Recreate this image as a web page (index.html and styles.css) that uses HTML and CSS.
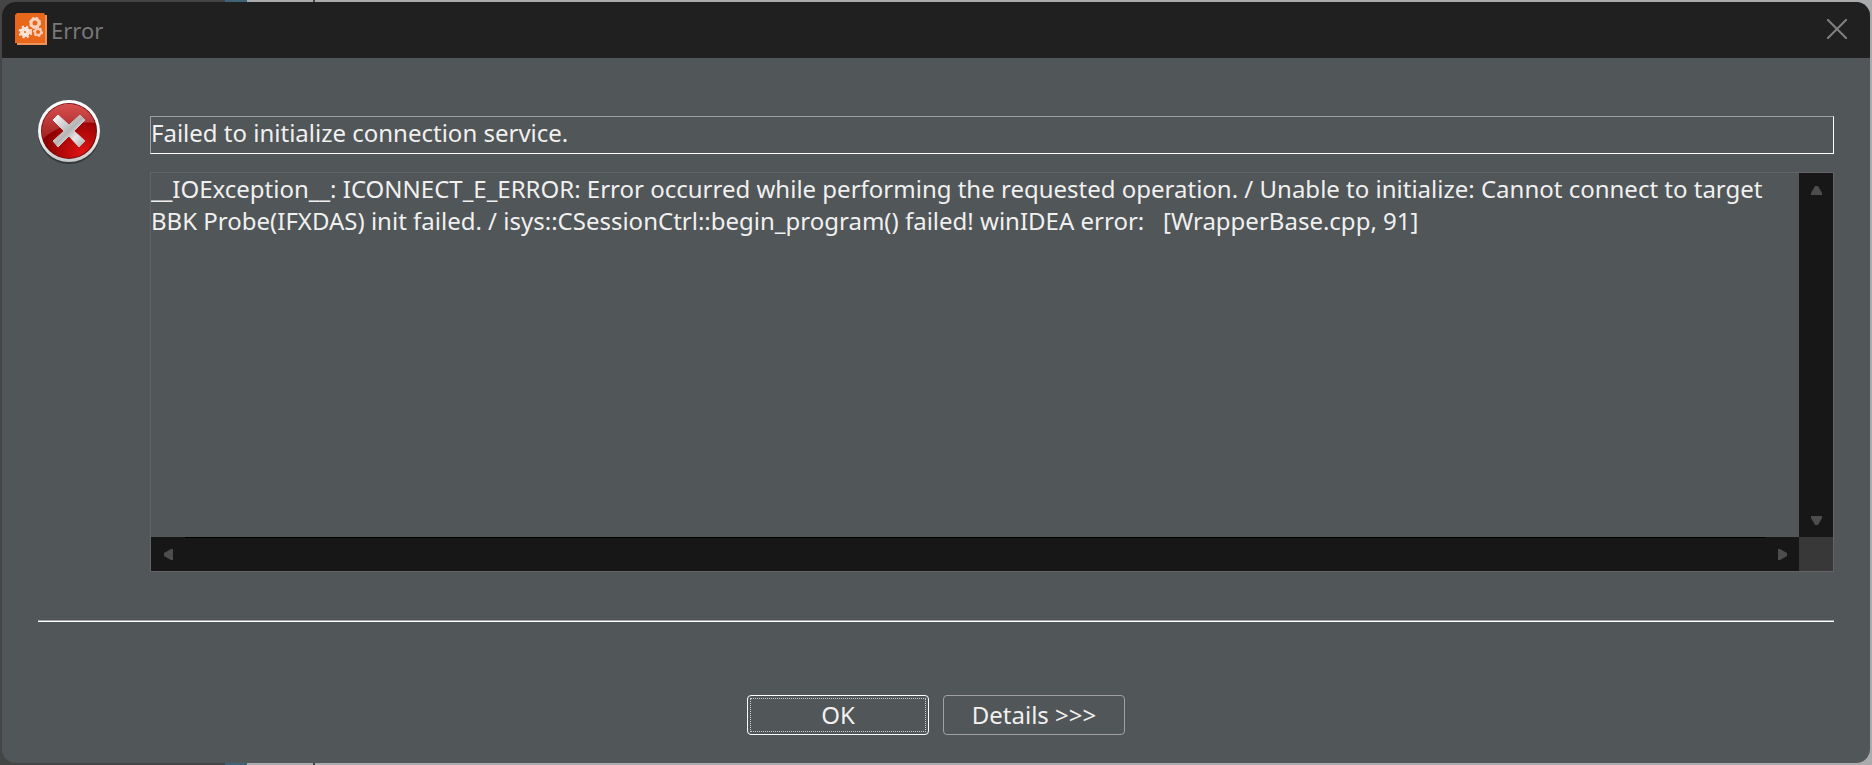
FILE: index.html
```html
<!DOCTYPE html>
<html lang="en">
<head>
  <meta charset="UTF-8">
  <meta name="viewport" content="width=device-width, initial-scale=1.0">
  <title>Error</title>
  <link rel="stylesheet" href="styles.css">
</head>
<body>
  <div class="dialog" role="alertdialog" aria-labelledby="dialogTitle">
    <header class="title-bar">
      <svg class="app-icon" viewBox="0 0 32 32" aria-hidden="true">
        <path fill="#f0935a" d="M2 0h27v2h3v30H2v-2H0V2h2z"/>
        <path fill="#e8671b" d="M2 0h27l1 2v28H2l-2-1V2z"/>
        <g fill="none" stroke="#fbe3d8">
          <circle cx="10" cy="19" r="3" stroke-width="4"/>
          <circle cx="10" cy="19" r="5" stroke-width="3" stroke-dasharray="2 2"/>
          <circle cx="20" cy="10" r="4" stroke-width="3" stroke="#f8d4c2"/>
          <circle cx="20" cy="10" r="5" stroke-width="2" stroke-dasharray="2 2" stroke="#f8d4c2"/>
          <circle cx="23" cy="19" r="3" stroke-width="2" stroke="#f8cdb8"/>
          <circle cx="23" cy="19" r="4" stroke-width="2" stroke-dasharray="2 2" stroke="#f8cdb8"/>
          <path d="M16 16v6" stroke-width="2" stroke="#f8cdb8"/>
        </g>
      </svg>
      <span class="title" id="dialogTitle">Error</span>
      <button class="close" aria-label="Close">
        <svg viewBox="0 0 20 20"><path d="M0 0L20 20M20 0L0 20"/></svg>
      </button>
    </header>

    <main class="content">
      <svg class="error-icon" viewBox="1 1 62 64" aria-hidden="true">
        <defs>
          <linearGradient id="ring" x1="0" y1="0" x2="0" y2="1">
            <stop offset="0" stop-color="#ffffff"/>
            <stop offset="0.6" stop-color="#f4f4f4"/>
            <stop offset="1" stop-color="#c8c8c8"/>
          </linearGradient>
          <radialGradient id="red" cx="0.75" cy="0.9" r="0.7">
            <stop offset="0" stop-color="#e01414"/>
            <stop offset="1" stop-color="#8c0000"/>
          </radialGradient>
          <linearGradient id="gloss" x1="0" y1="0" x2="0" y2="1">
            <stop offset="0" stop-color="#d85050"/>
            <stop offset="1" stop-color="#a02020"/>
          </linearGradient>
          <linearGradient id="cross" x1="0" y1="0" x2="1" y2="1">
            <stop offset="0" stop-color="#ffffff"/>
            <stop offset="0.5" stop-color="#b4b4b4"/>
            <stop offset="0.7" stop-color="#e8e8e8"/>
            <stop offset="1" stop-color="#a8a8a8"/>
          </linearGradient>
        </defs>
        <circle cx="32" cy="34" r="31" fill="#34383a"/>
        <circle cx="32" cy="32" r="31" fill="url(#ring)"/>
        <circle cx="32" cy="32" r="28" fill="#6d0d0d"/>
        <circle cx="32" cy="32" r="27" fill="url(#red)"/>
        <path fill="url(#gloss)" d="M6 40A27 27 0 1 1 58 24C40 22 18 28 6 40z"/>
        <path fill="url(#cross)" stroke="url(#cross)" stroke-width="1" stroke-linejoin="round" d="M21 16L32 26L43 16L48 21L37 32L48 42L42 48L32 37L21 48L16 42L27 32L16 21z"/>
      </svg>
      <div class="fields">
        <input class="message" type="text" value="Failed to initialize connection service." aria-label="Message" readonly>
        <div class="details">
          <textarea class="details-text" wrap="off" aria-label="Details" readonly>
__IOException__: ICONNECT_E_ERROR: Error occurred while performing the requested operation. / Unable to initialize: Cannot connect to target
BBK Probe(IFXDAS) init failed. / isys::CSessionCtrl::begin_program() failed! winIDEA error:   [WrapperBase.cpp, 91]</textarea>
          <div class="scrollbar vertical">
            <button aria-label="Scroll up"><svg viewBox="0 0 11 9"><path d="M4 0h3l4 7v2H0V7z"/></svg></button>
            <button aria-label="Scroll down"><svg viewBox="0 0 11 9"><path d="M0 0h11v2L7 9H4L0 2z"/></svg></button>
          </div>
          <div class="scrollbar horizontal">
            <button aria-label="Scroll left"><svg viewBox="0 0 9 11"><path d="M9 0v11H7L0 7V4l7-4z"/></svg></button>
            <div class="track"></div>
            <button aria-label="Scroll right"><svg viewBox="0 0 9 11"><path d="M0 0h2l7 4v3l-7 4H0z"/></svg></button>
          </div>
          <div class="corner"></div>
        </div>
      </div>
    </main>

    <hr class="separator">

    <footer class="buttons">
      <button class="btn default">OK</button>
      <button class="btn">Details &gt;&gt;&gt;</button>
    </footer>
  </div>
</body>
</html>
```

FILE: styles.css
```css
* {
  box-sizing: border-box;
}

body {
  margin: 0;
  min-height: 100vh;
  padding: 2px;
  display: flex;
  /* desktop behind the dialog */
  background: linear-gradient(to right, #454545 225px, #3f6478 225px 247px, #a9abac 247px 313px, #454545 313px 315px, #a9abac 315px);
  font-family: "Noto Sans", "Open Sans", sans-serif;
  font-size: 24px;
  line-height: 32px;
  color: #f0f0f0;
}

button, input, textarea {
  font: inherit;
  color: inherit;
  background: none;
  border: none;
  border-radius: 0;
  margin: 0;
  padding: 0;
}

.dialog {
  flex: 1;
  min-width: 0;
  display: flex;
  flex-direction: column;
  background: #515658;
  border-radius: 14px;
  overflow: hidden;
}

.title-bar {
  height: 56px;
  flex: none;
  display: flex;
  align-items: center;
  padding: 0 23px 2px 13px;
  background: #202020;
  color: #787878;
}

.app-icon {
  width: 32px;
  height: 32px;
  margin-right: 4px;
}

.title {
  padding-top: 2px;
  font-size: 22px;
}

.close {
  margin-left: auto;
  display: flex;
}

.close svg {
  width: 20px;
  height: 20px;
  fill: none;
  stroke: #808080;
  stroke-width: 2;
}

.content {
  flex: 1;
  display: flex;
  gap: 50px;
  padding: 42px 36px 0;
}

.error-icon {
  width: 62px;
  height: 64px;
  flex: none;
}

.fields {
  flex: 1;
  min-width: 0;
  display: flex;
  flex-direction: column;
  gap: 18px;
  padding-top: 16px;
}

.message {
  height: 38px;
  border: 1px solid #a0a0a0;
  border-right-color: #fff;
  border-bottom-color: #fff;
  padding-bottom: 6px;
  outline: none;
}

.details {
  flex: 1;
  display: grid;
  grid-template-columns: 1fr 34px;
  grid-template-rows: 1fr 34px;
  border: 1px solid #646464;
}

.details-text {
  min-width: 0;
  resize: none;
  overflow: hidden;
  outline: none;
}

.scrollbar {
  display: flex;
  justify-content: space-between;
  background: #171717;
}

.scrollbar button {
  width: 34px;
  height: 34px;
  display: flex;
  align-items: center;
  justify-content: center;
}

.scrollbar svg {
  width: 11px;
  height: 11px;
  fill: #4d4d4d;
}

.vertical {
  flex-direction: column;
}

.track {
  flex: 1;
  border-top: 1px solid #000;
}

.corner {
  background: #383838;
}

.separator {
  width: calc(100% - 72px);
  height: 2px;
  margin: 48px 36px 73px;
  border: none;
  border-top: 1px solid #a0a0a0;
  border-bottom: 1px solid #fff;
}

.buttons {
  display: flex;
  justify-content: center;
  gap: 14px;
  padding-bottom: 28px;
}

.btn {
  width: 182px;
  height: 40px;
  border: 1px solid #a0a0a0;
  border-radius: 4px;
}

.btn.default {
  border-color: #fff;
  outline: 1px dotted #d0d0d0;
  outline-offset: -4px;
}
```
